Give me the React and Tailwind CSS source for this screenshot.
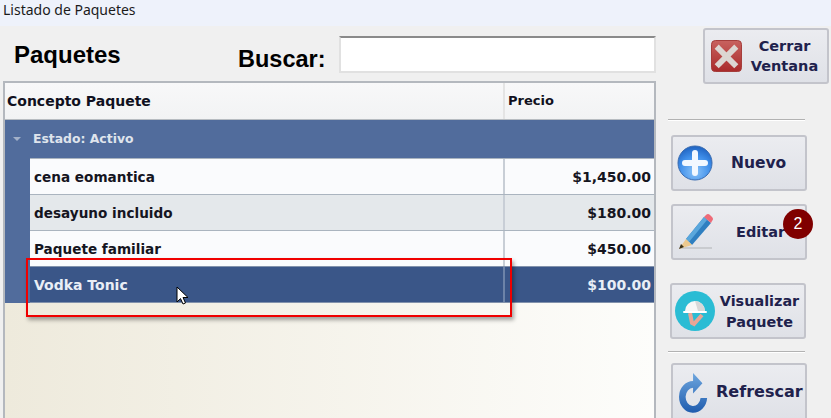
const tahoma = { fontFamily: '"DejaVu Sans", "Noto Sans", sans-serif' };
const ui = { fontFamily: '"Noto Sans", "Open Sans", sans-serif' };

const rows = [
  { name: "cena eomantica", price: "$1,450.00", bg: "bg-[#fafbfd]" },
  { name: "desayuno incluido", price: "$180.00", bg: "bg-[#e4e8eb]" },
  { name: "Paquete familiar", price: "$450.00", bg: "bg-[#fafbfd]" },
];

const CloseIcon = () => (
  <svg width="31" height="32" viewBox="0 0 32 33">
    <defs>
      <linearGradient id="redBox" x1="0" y1="0" x2="0" y2="1">
        <stop offset="0" stopColor="#c8625f" />
        <stop offset="1" stopColor="#a92a2a" />
      </linearGradient>
    </defs>
    <rect x="0.5" y="0.5" width="31" height="32" rx="4" fill="url(#redBox)" stroke="#a33a38" />
    <path d="M8 9 L24 25 M24 9 L8 25" stroke="#dcd6d2" strokeWidth="6" strokeLinecap="square" />
  </svg>
);

const PlusIcon = () => (
  <svg width="36" height="36" viewBox="0 0 36 36">
    <defs>
      <radialGradient id="bluePlus" cx="0.5" cy="0.75" r="0.75">
        <stop offset="0" stopColor="#8cc4f8" />
        <stop offset="0.6" stopColor="#3f8fea" />
        <stop offset="1" stopColor="#1f62c0" />
      </radialGradient>
    </defs>
    <circle cx="18" cy="18" r="17" fill="url(#bluePlus)" stroke="#3a6cb0" />
    <path d="M18 8 V28 M8 18 H28" stroke="#f2f8ff" strokeWidth="6" strokeLinecap="round" />
  </svg>
);

const PencilIcon = () => (
  <svg width="36" height="36" viewBox="0 0 36 36">
    <path d="M3 34 H34" stroke="#c9cbcf" strokeWidth="2" />
    <path d="M8 25 L26 3 L33 9 L14 31 Z" fill="#2f7fc0" />
    <path d="M8 25 L26 3 L29 6 L11 28 Z" fill="#5aa7dc" />
    <path d="M26 3 L28 1 Q30 -1 32 1 L34 3 Q36 5 34 7 L33 9 Z" fill="#ee6b78" />
    <path d="M8 25 L14 31 L1 35 Z" fill="#ecc98f" />
    <path d="M3 30 L6 33 L1 35 Z" fill="#3a3018" />
  </svg>
);

const PackageIcon = () => (
  <svg width="40" height="40" viewBox="0 0 40 40">
    <circle cx="20" cy="20" r="20" fill="#2abcd4" />
    <path d="M15 22 L17 32 L19 33 L27 24" fill="none" stroke="#e9a596" strokeWidth="4" />
    <path d="M10 20 A10 10 0 0 1 30 20 Z" fill="#f7f7f7" />
    <path d="M20 10 A10 10 0 0 1 30 20 L23 20 Z" fill="#d8d8d8" />
    <rect x="8" y="20" width="24" height="2" rx="1" fill="#ffffff" />
  </svg>
);

const RefreshIcon = () => (
  <svg className="mt-[3px]" width="30" height="41" viewBox="0 0 32 36" preserveAspectRatio="none">
    <defs>
      <linearGradient id="blueArrow" x1="0" y1="0" x2="0" y2="1">
        <stop offset="0" stopColor="#6ea6de" />
        <stop offset="1" stopColor="#1f5cae" />
      </linearGradient>
    </defs>
    <path
      d="M15 7 L15 0 L25 9 L15 18 L15 13 A8 8 0 1 0 23 22 L30 22 A15 14 0 1 1 15 7 Z"
      fill="url(#blueArrow)"
    />
  </svg>
);

const Divider = ({ className }) => (
  <div className={`h-[2px] border-t border-[#b2b2b2] bg-white ${className}`} />
);

const ActionButton = ({ className, children }) => (
  <div
    className={`flex items-center rounded-[3px] border-2 border-[#c3c4cb] bg-gradient-to-b from-[#ebecf0] to-[#dfe1e7] font-bold text-[#20214c] ${className}`}
    style={tahoma}
  >
    {children}
  </div>
);

export default function App() {
  return (
    <div className="relative h-[418px] w-[831px] overflow-hidden bg-[#f0f0f0]" style={tahoma}>
      <div className="h-[26px] bg-[#eef2fb] pl-[3px] text-[14px] leading-[19px] text-[#1b1b1b]" style={ui}>
        Listado de Paquetes
      </div>

      <div className="flex">
        <div className="ml-[3px] w-[653px]">
          <div className="flex h-[55px] items-start text-black" style={{ fontFamily: '"Liberation Sans", sans-serif' }}>
            <span className="ml-[11px] mt-[15px] w-[108px] text-[24px] font-bold leading-[28px]">Paquetes</span>
            <span className="ml-[116px] mt-[19px] w-[87px] whitespace-nowrap text-[23.5px] font-bold leading-[28px]">Buscar:</span>
            <div className="ml-[14px] mt-[10px] h-[37px] flex-1 border-2 border-[#e1e1e1] border-t-[#8a8a8a] bg-white" />
          </div>

          <div className="h-[337px] border-2 border-b-0 border-[#b4b8be] bg-gradient-to-r from-[#eeeadc] to-[#fdfdfb]">
            <div className="flex h-[37px] items-center border-b border-[#b7bcc1] bg-gradient-to-b from-[#f8f8f9] to-[#f2f3f4] font-bold text-[#101020]">
              <div className="w-[498px] pl-[2px] text-[14px]">Concepto Paquete</div>
              <div className="h-full flex-1 border-l-2 border-[#e4e4e4] pl-[3px] text-[13px] leading-[36px]">Precio</div>
            </div>

            <div className="bg-[#516c9c]">
              <div className="flex h-[38px] items-center text-[12.4px] font-bold text-[#dfe4ec]">
                <span className="ml-[8px] mr-[12px] h-0 w-0 border-x-[4px] border-t-[4px] border-x-transparent border-t-[#a3b1c9]" />
                Estado: Activo
              </div>
              <div className="ml-[25px]">
                {rows.map((row) => (
                  <div
                    key={row.name}
                    className={`flex h-[36px] items-center border-t border-[#aab4bf] font-bold text-[#15151f] ${row.bg}`}
                  >
                    <div className="w-[473px] pl-[4px] pt-[2px] text-[13.6px]">{row.name}</div>
                    <div className="flex h-full flex-1 items-center justify-end border-l-2 border-[#c8ced6] pr-[3px] pt-[2px] text-[14px]">
                      {row.price}
                    </div>
                  </div>
                ))}
                <div className="flex h-[37px] items-center border-y border-[#8292ac] bg-[#3a5688] font-bold text-[#e9eef6]">
                  <div className="w-[473px] pl-[4px] pt-[2px] text-[14px]">Vodka Tonic</div>
                  <div className="flex h-full flex-1 items-center justify-end border-l-2 border-[#6d83a8] pr-[3px] pt-[2px] text-[14px]">
                    $100.00
                  </div>
                </div>
              </div>
            </div>
          </div>
        </div>

        <div className="ml-[12px] flex w-[162px] flex-col text-center">
          <ActionButton className="ml-[35px] mt-[2px] h-[56px] w-[126px] pl-[6px] text-[14.5px] leading-[20px]">
            <CloseIcon />
            <span className="flex-1">Cerrar<br />Ventana</span>
          </ActionButton>
          <Divider className="mt-[35px] w-[137px]" />
          <ActionButton className="ml-[3px] mt-[14px] h-[56px] w-[136px] pl-[4px] text-[15.5px]">
            <PlusIcon />
            <span className="ml-[18px] pt-[2px]">Nuevo</span>
          </ActionButton>
          <ActionButton className="ml-[3px] mt-[13px] h-[56px] w-[136px] pl-[5px] text-[14.5px]">
            <PencilIcon />
            <span className="ml-[22px] pt-[2px]">Editar</span>
          </ActionButton>
          <ActionButton className="ml-[2px] mt-[23px] h-[56px] w-[136px] pl-[3px] text-[14.4px] leading-[21px]">
            <PackageIcon />
            <span className="flex-1 pt-[1px]">Visualizar<br />Paquete</span>
          </ActionButton>
          <Divider className="mt-[12px] w-[137px]" />
          <ActionButton className="ml-[3px] mt-[10px] h-[58px] w-[136px] pl-[6px] text-[16px]">
            <RefreshIcon />
            <span className="ml-[7px]">Refrescar</span>
          </ActionButton>
        </div>
      </div>

      {/* anotaciones sobre la captura */}
      <div className="absolute left-[26px] top-[258px] h-[59px] w-[486px] border-2 border-[#f00000] shadow-[2px_3px_4px_rgba(0,0,0,0.35)]" />
      <svg className="absolute left-[176px] top-[286px]" width="14" height="20" viewBox="0 0 14 20">
        <path d="M1 1 V16 L4.5 12.6 L7 18 L9.5 17 L7 11.5 L12 11.5 Z" fill="#ffffff" stroke="#000000" />
      </svg>
      <div className="absolute left-[783px] top-[209px] flex h-[30px] w-[30px] items-center justify-center rounded-full bg-[#800000] text-[16px] text-white" style={{ fontFamily: '"Liberation Sans", sans-serif' }}>
        2
      </div>
    </div>
  );
}
